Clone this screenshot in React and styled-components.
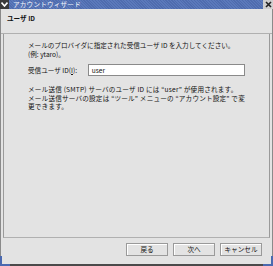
import React from "react";
import styled, { createGlobalStyle } from "styled-components";

const Global = createGlobalStyle`
  html, body { margin: 0; padding: 0; background: #e3e3e3; }
  body { font-family: "Noto Sans CJK JP", "Noto Sans", sans-serif; }
`;

const Window = styled.div`
  position: relative;
  width: 273px;
  height: 266px;
  box-sizing: border-box;
  display: flex;
  flex-direction: column;
  background: #e3e3e3;
  border-left: 1px solid #8a8a8a;
  border-right: 1px solid #8a8a8a;
  border-bottom: 2px solid #4a4a4a;
  color: #111;
  font-size: 6.6px;
  line-height: 8.6px;
`;

const TitleBar = styled.div`
  height: 9px;
  margin: 0 -1px;
  display: flex;
  align-items: center;
  background: repeating-linear-gradient(45deg, #5b79bb 0 1px, #4f6cae 1px 2px);
  color: #f4f6fb;
  font-size: 6.6px;
`;

const MenuIcon = styled.div`
  width: 9px;
  height: 9px;
  background: #3b3b3b;
  display: flex;
  align-items: center;
  justify-content: center;
`;

const Title = styled.span`
  margin-left: 4px;
  flex: 1;
  letter-spacing: 0.2px;
`;

const CloseBox = styled.div`
  width: 10px;
  height: 9px;
  background: #cfcfcf;
  display: flex;
  align-items: center;
  justify-content: center;
`;

const Header = styled.div`
  height: 25px;
  padding: 5px 0 0 6px;
  box-sizing: border-box;
  font-weight: bold;
  border-bottom: 1px solid #b0b0b0;
`;

const Body = styled.div`
  flex: 1;
  margin: 0 2px;
  border-left: 1px solid #9a9a9a;
  border-right: 1px solid #9a9a9a;
  border-bottom: 1px solid #b0b0b0;
  padding: 7px 24px 0 24px;
  display: flex;
  flex-direction: column;
`;

const Para = styled.p`
  margin: 0;
`;

const FieldRow = styled.div`
  display: flex;
  align-items: center;
  margin-top: 6px;
  height: 12px;
`;

const Label = styled.span`
  width: 60px;
`;

const Input = styled.div`
  width: 158px;
  height: 12px;
  box-sizing: border-box;
  border: 1px solid #8a8a8a;
  background: #fff;
  padding-left: 3px;
  display: flex;
  align-items: center;
`;

const Note = styled(Para)`
  margin-top: 9px;
  letter-spacing: 0.2px;
`;

const Footer = styled.div`
  height: 26px;
  display: flex;
  justify-content: flex-end;
  align-items: flex-start;
  gap: 5px;
  padding: 5px 10px 0 0;
  box-sizing: border-box;
`;

const Button = styled.div`
  width: 42px;
  height: 13px;
  box-sizing: border-box;
  border: 1px solid #9a9a9a;
  box-shadow: inset 1px 1px 0 #fff;
  display: flex;
  align-items: center;
  justify-content: center;
`;

const Corner = styled.div`
  position: absolute;
  bottom: -2px;
  ${(p) => (p.$side === "left" ? "left: -1px;" : "right: -1px;")}
  width: 10px;
  height: 10px;
  ${(p) =>
    p.$side === "left"
      ? "border-left: 2px solid #4a69b0; border-bottom: 2px solid #4a69b0;"
      : "border-right: 2px solid #4a69b0; border-bottom: 2px solid #4a69b0;"}
  box-sizing: border-box;
`;

export default function App() {
  return (
    <>
      <Global />
      <Window>
        <TitleBar>
          <MenuIcon>
            <svg width="7" height="5" viewBox="0 0 7 5">
              <path d="M0.5 0.5 L3.5 4 L6.5 0.5" stroke="#fff" strokeWidth="1.6" fill="none" />
            </svg>
          </MenuIcon>
          <Title>アカウントウィザード</Title>
          <CloseBox>
            <svg width="7" height="7" viewBox="0 0 7 7">
              <path d="M1 1 L6 6 M6 1 L1 6" stroke="#222" strokeWidth="1.6" />
            </svg>
          </CloseBox>
        </TitleBar>
        <Header>ユーザ ID</Header>
        <Body>
          <Para>
            メールのプロバイダに指定された受信ユーザ ID を入力してください。
            <br />
            (例: ytaro)。
          </Para>
          <FieldRow>
            <Label>
              受信ユーザ ID(<u>I</u>):
            </Label>
            <Input>user</Input>
          </FieldRow>
          <Note>
            メール送信 (SMTP) サーバのユーザ ID には “user” が使用されます。
            <br />
            メール送信サーバの設定は “ツール” メニューの “アカウント設定” で変更できます。
          </Note>
        </Body>
        <Footer>
          <Button>戻る</Button>
          <Button>次へ</Button>
          <Button>キャンセル</Button>
        </Footer>
        <Corner $side="left" />
        <Corner $side="right" />
      </Window>
    </>
  );
}
